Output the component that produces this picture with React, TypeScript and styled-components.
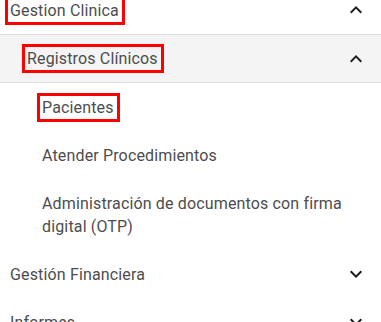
import styled, {createGlobalStyle} from 'styled-components'

const GlobalStyle = createGlobalStyle`
  html, body {
    margin: 0;
    padding: 0;
    background: #ffffff;
    overflow: hidden;
  }
  body {
    font-family: Roboto, "Noto Sans", "Liberation Sans", sans-serif;
  }
`

interface RowProps {
  $level: number;
  $active?: boolean;
}

const indent = [5, 22, 37]

const Menu = styled.nav`
  width: 381px;
  height: 322px;
  overflow: hidden;
  display: flex;
  flex-direction: column;
`

const List = styled.div`
  margin-top: -14px;
  display: flex;
  flex-direction: column;
`

const Row = styled.div<RowProps>`
  box-sizing: border-box;
  display: flex;
  align-items: center;
  justify-content: space-between;
  gap: 8px;
  min-height: ${(p) => (p.$active ? '49px' : '48px')};
  padding: ${(p) => (p.$active ? '0' : '9.5px')} 13px ${(p) => (p.$active ? '0' : '9.5px')} ${(p) => indent[p.$level]}px;
  background-color: ${(p) => (p.$active ? '#f4f4f4' : '#ffffff')};
  border-top: ${(p) => (p.$active ? '1px solid #e0e0e0' : 'none')};
  border-bottom: ${(p) => (p.$active ? '1px solid #e0e0e0' : 'none')};
  cursor: pointer;
`

const Label = styled.span<{$marked?: boolean}>`
  display: inline-block;
  font-size: 16px;
  line-height: 23px;
  letter-spacing: 0.15px;
  color: #4d4d4d;
  border: 3px solid ${(p) => (p.$marked ? '#ff0000' : 'transparent')};
  padding: 0 3px 0 2px;
`

const Chevron = styled.svg`
  flex: none;
  width: 24px;
  height: 24px;
  fill: #1e1e1e;
`

const ChevronIcon = ({open}: {open: boolean}) => (
  <Chevron viewBox="0 0 24 24">
    {open ? (
      <path d="M12 8l-6 6 1.41 1.41L12 10.83l4.59 4.58L18 14z" />
    ) : (
      <path d="M16.59 8.59L12 13.17 7.41 8.59 6 10l6 6 6-6z" />
    )}
  </Chevron>
)

const App = () => {
  return (
    <>
      <GlobalStyle />
      <Menu>
        <List>
          <Row $level={0}>
            <Label $marked>Gestion Clinica</Label>
            <ChevronIcon open />
          </Row>
          <Row $level={1} $active>
            <Label $marked>Registros Clínicos</Label>
            <ChevronIcon open />
          </Row>
          <Row $level={2}>
            <Label $marked>Pacientes</Label>
          </Row>
          <Row $level={2}>
            <Label>Atender Procedimientos</Label>
          </Row>
          <Row $level={2}>
            <Label>Administración de documentos con firma digital (OTP)</Label>
          </Row>
          <Row $level={0}>
            <Label>Gestión Financiera</Label>
            <ChevronIcon open={false} />
          </Row>
          <Row $level={0}>
            <Label>Informes</Label>
            <ChevronIcon open={false} />
          </Row>
        </List>
      </Menu>
    </>
  )
}

export default App
